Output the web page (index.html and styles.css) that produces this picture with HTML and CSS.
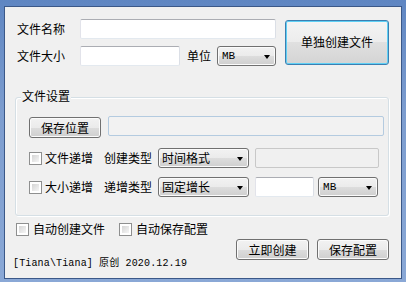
FILE: index.html
```html
<!DOCTYPE html>
<html>
<head>
<meta charset="utf-8">
<link rel="stylesheet" href="styles.css">
</head>
<body>
<div class="frame">
  <div class="client">
    <div class="top">
      <div class="fields">
        <div class="row">
          <span class="lbl">文件名称</span>
          <span class="txt w196"></span>
        </div>
        <div class="row">
          <span class="lbl">文件大小</span>
          <span class="txt w100"></span>
          <span class="unit">单位</span>
          <span class="sel w59"><span class="mono">MB</span><span class="arrow"></span></span>
        </div>
      </div>
      <span class="btn btn-main">单独创建文件</span>
    </div>

    <div class="group">
      <span class="legend">文件设置</span>
      <div class="grow grow-a">
        <span class="btn btn-save">保存位置</span>
        <span class="txt-dis blue w276"></span>
      </div>
      <div class="grow grow-b">
        <span class="chk"></span>
        <span class="clbl">文件递增</span>
        <span class="tlbl">创建类型</span>
        <span class="sel w91"><span>时间格式</span><span class="arrow"></span></span>
        <span class="txt-dis w124 gap6"></span>
      </div>
      <div class="grow grow-c">
        <span class="chk"></span>
        <span class="clbl">大小递增</span>
        <span class="tlbl">递增类型</span>
        <span class="sel w91"><span>固定增长</span><span class="arrow"></span></span>
        <span class="txt w59 gap6"></span>
        <span class="sel w60 gap4"><span class="mono">MB</span><span class="arrow"></span></span>
      </div>
    </div>

    <div class="opts">
      <span class="chk"></span>
      <span class="clbl2">自动创建文件</span>
      <span class="chk chk2"></span>
      <span class="clbl2">自动保存配置</span>
    </div>

    <div class="bottom">
      <span class="footer">[Tiana\Tiana] 原创 2020.12.19</span>
      <div class="actions">
        <span class="btn btn-act w73">立即创建</span>
        <span class="btn btn-act w72">保存配置</span>
      </div>
    </div>
  </div>
</div>
</body>
</html>
```
FILE: styles.css
```css
html, body {
  margin: 0;
  padding: 0;
}
body {
  width: 406px;
  height: 282px;
  overflow: hidden;
}
.frame {
  box-sizing: border-box;
  width: 406px;
  height: 282px;
  padding: 6px 4px 3px 4px;
  background: linear-gradient(180deg, #5f86c2 0%, #7d9dcf 40%, #8aa8d6 100%);
}
.client {
  box-sizing: border-box;
  height: 100%;
  border: 1px solid #3b5888;
  background: #f0f0f0;
  padding-top: 12px;
  font-family: "Noto Sans CJK SC", "Noto Sans", sans-serif;
  font-size: 12px;
  line-height: 14px;
  color: #000;
}
.top {
  display: flex;
  margin-left: 12px;
}
.fields {
  display: flex;
  flex-direction: column;
  gap: 7px;
}
.row {
  display: flex;
  align-items: center;
}
.lbl {
  width: 63px;
}
.txt {
  box-sizing: border-box;
  height: 20px;
  background: #fff;
  border: 1px solid;
  border-color: #abadb3 #dbdfe6 #e3e9ef #e2e3ea;
  border-radius: 2px;
}
.txt-dis {
  box-sizing: border-box;
  height: 20px;
  background: #f0f0f0;
  border: 1px solid #c8c8c8;
  border-radius: 2px;
}
.txt-dis.blue {
  border-color: #b4cbe0;
  background: #f2f2f2;
}
.w196 { width: 196px; }
.w100 { width: 100px; }
.w59 { width: 59px; }
.w60 { width: 60px; }
.w91 { width: 91px; }
.w124 { width: 124px; }
.w276 { width: 276px; }
.w72 { width: 72px; }
.w73 { width: 73px; }
.gap6 { margin-left: 6px; }
.gap4 { margin-left: 4px; }
.unit {
  margin-left: 7px;
  margin-right: 6px;
}
.btn {
  box-sizing: border-box;
  display: flex;
  align-items: center;
  justify-content: center;
  border: 1px solid #707070;
  border-radius: 3px;
  background: linear-gradient(180deg, #f2f2f2 0%, #ebebeb 50%, #dddddd 50%, #cfcfcf 100%);
  box-shadow: inset 0 0 0 1px #fbfbfb;
  color: #000;
}
.btn-main {
  margin-left: 9px;
  margin-top: 1px;
  width: 104px;
  height: 45px;
  border-color: #3c7fb1;
  box-shadow: inset 0 0 0 1px #5fd0f5;
  background: linear-gradient(180deg, #f4f4f4 0%, #ececec 50%, #e0e0e0 50%, #d4d4d4 100%);
  padding-bottom: 2px;
}
.sel {
  box-sizing: border-box;
  height: 20px;
  display: flex;
  align-items: center;
  justify-content: space-between;
  padding: 0 5px 0 3px;
  border: 1px solid #707070;
  border-radius: 3px;
  background: linear-gradient(180deg, #f2f2f2 0%, #ebebeb 50%, #dddddd 50%, #cfcfcf 100%);
  box-shadow: inset 0 0 0 1px #fbfbfb;
}
.mono {
  font-family: "Liberation Mono", monospace;
  font-size: 11px;
  padding-left: 1px;
}
.arrow {
  width: 0;
  height: 0;
  border-left: 3.5px solid transparent;
  border-right: 3.5px solid transparent;
  border-top: 4px solid #000;
  margin-top: 1px;
}
.group {
  position: relative;
  box-sizing: border-box;
  margin-top: 31px;
  margin-left: 10px;
  width: 374px;
  height: 119px;
  border: 1px solid #d5dfe5;
  border-radius: 3px;
  box-shadow: inset 1px 1px 0 #fff, 1px 1px 0 #fff;
  padding: 18px 0 0 13px;
}
.legend {
  position: absolute;
  left: 5px;
  top: -9px;
  padding: 0 1px;
  background: #f0f0f0;
  line-height: 14px;
}
.grow {
  display: flex;
  align-items: center;
}
.grow-a {
  align-items: flex-start;
}
.btn-save {
  width: 72px;
  height: 21px;
  margin-top: 1px;
  margin-right: 7px;
}
.grow-b {
  margin-top: 10px;
}
.grow-c {
  margin-top: 9px;
}
.chk {
  box-sizing: border-box;
  width: 13px;
  height: 13px;
  border: 1px solid #8e8f8f;
  padding: 1px;
  background: linear-gradient(135deg, #d0d0d0 0%, #f2f2f2 80%, #fafafa 100%) content-box, #fff;
  box-shadow: inset 0 0 0 2px #fff;
}
.clbl {
  margin-left: 3px;
}
.tlbl {
  margin-left: 11px;
  margin-right: 6px;
}
.opts {
  display: flex;
  align-items: center;
  margin-top: 6px;
  margin-left: 11px;
}
.clbl2 {
  margin-left: 4px;
}
.chk2 {
  margin-left: 14px;
}
.bottom {
  display: flex;
  justify-content: space-between;
  margin-top: 3px;
  height: 31px;
}
.footer {
  align-self: flex-end;
  margin-left: 8px;
  font-family: "Liberation Mono", "Noto Sans CJK SC", monospace;
  font-size: 10px;
  letter-spacing: 0.15px;
  line-height: 12px;
}
.actions {
  display: flex;
  gap: 8px;
  margin-right: 12px;
  align-self: flex-start;
}
.btn-act {
  height: 21px;
}
```
